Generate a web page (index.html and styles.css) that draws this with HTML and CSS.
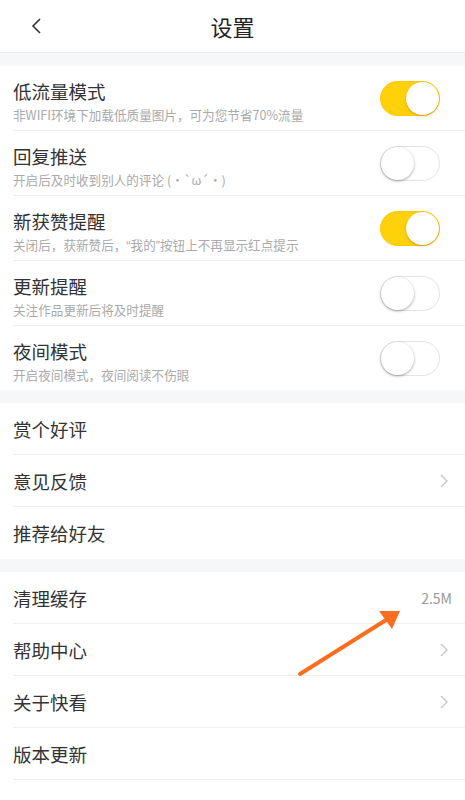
FILE: index.html
```html
<!DOCTYPE html>
<html lang="zh-CN">
<head>
    <meta charset="UTF-8">
    <meta name="viewport" content="width=device-width, initial-scale=1.0">
    <title>设置</title>
    <link rel="stylesheet" href="styles.css">
</head>
<body>
    <header class="topbar">
        <span class="back">
            <svg width="12" height="18" viewBox="0 0 12 18"><path d="M9 2 L2 9 L9 16" fill="none" stroke="#333" stroke-width="1.6"/></svg>
        </span>
        <h1>设置</h1>
    </header>

    <div class="gap"></div>
    <section class="group">
        <div class="row tall">
            <div class="text">
                <div class="title">低流量模式</div>
                <div class="sub">非WIFI环境下加载低质量图片，可为您节省70%流量</div>
            </div>
            <span class="switch on"><span class="knob"></span></span>
        </div>
        <div class="row tall">
            <div class="text">
                <div class="title">回复推送</div>
                <div class="sub">开启后及时收到别人的评论 (・`ω´・)</div>
            </div>
            <span class="switch"><span class="knob"></span></span>
        </div>
        <div class="row tall">
            <div class="text">
                <div class="title">新获赞提醒</div>
                <div class="sub">关闭后，获新赞后，<span class="latin">“</span>我的<span class="latin">”</span>按钮上不再显示红点提示</div>
            </div>
            <span class="switch on"><span class="knob"></span></span>
        </div>
        <div class="row tall">
            <div class="text">
                <div class="title">更新提醒</div>
                <div class="sub">关注作品更新后将及时提醒</div>
            </div>
            <span class="switch"><span class="knob"></span></span>
        </div>
        <div class="row tall last">
            <div class="text">
                <div class="title">夜间模式</div>
                <div class="sub">开启夜间模式，夜间阅读不伤眼</div>
            </div>
            <span class="switch"><span class="knob"></span></span>
        </div>
    </section>

    <div class="gap"></div>
    <section class="group">
        <div class="row"><div class="title">赏个好评</div></div>
        <div class="row">
            <div class="title">意见反馈</div>
            <svg class="chev" width="10" height="16" viewBox="0 0 10 16"><path d="M2 2 L8 8 L2 14" fill="none" stroke="#c8c8c8" stroke-width="1.4"/></svg>
        </div>
        <div class="row last"><div class="title">推荐给好友</div></div>
    </section>

    <div class="gap"></div>
    <section class="group">
        <div class="row">
            <div class="title">清理缓存</div>
            <span class="value">2.5M</span>
        </div>
        <div class="row">
            <div class="title">帮助中心</div>
            <svg class="chev" width="10" height="16" viewBox="0 0 10 16"><path d="M2 2 L8 8 L2 14" fill="none" stroke="#c8c8c8" stroke-width="1.4"/></svg>
        </div>
        <div class="row">
            <div class="title">关于快看</div>
            <svg class="chev" width="10" height="16" viewBox="0 0 10 16"><path d="M2 2 L8 8 L2 14" fill="none" stroke="#c8c8c8" stroke-width="1.4"/></svg>
        </div>
        <div class="row"><div class="title">版本更新</div></div>
    </section>

    <!-- annotation arrow pointing at cache size -->
    <svg class="arrow" width="465" height="800" viewBox="0 0 465 800">
        <line x1="300" y1="674" x2="386" y2="620" stroke="#fb6d1f" stroke-width="4" stroke-linecap="round"/>
        <polygon points="400,611 379,611 392,629" fill="#fb6d1f"/>
    </svg>
</body>
</html>
```

FILE: styles.css
```css
body {
    margin: 0;
    background: #fff;
    font-family: "Noto Sans CJK SC", "Noto Sans", sans-serif;
    color: #333;
    position: relative;
}
.topbar {
    height: 52px;
    border-bottom: 1px solid #ececec;
    display: flex;
    align-items: center;
    justify-content: center;
    position: relative;
}
.topbar h1 {
    margin: 0;
    font-size: 22px;
    font-weight: normal;
    color: #222;
}
.back {
    position: absolute;
    left: 31px;
    top: 16px;
}
.gap {
    height: 13px;
    background: #f6f7f9;
}
.group {
    padding-left: 13px;
}
.row {
    height: 51px;
    border-bottom: 1px solid #efefef;
    display: flex;
    align-items: center;
    justify-content: space-between;
    padding-right: 18px;
}
.row.tall {
    height: 64px;
    padding-right: 25px;
}
.row.last {
    border-bottom: none;
    height: 52px;
}
.row.tall.last {
    height: 64px;
}
.title {
    font-size: 18.5px;
    line-height: 24px;
    color: #333;
}
.sub {
    font-size: 12.6px;
    line-height: 16px;
    color: #aaa;
    margin-top: 4px;
}
.latin {
    font-family: "Liberation Sans", sans-serif;
}
.text {
    padding-top: 6px;
}
.value {
    font-size: 14px;
    color: #999;
    margin-right: -5px;
}
.chev {
    margin-right: -2px;
}
.switch {
    width: 58px;
    height: 33px;
    border-radius: 18px;
    border: 1px solid #e3e3e3;
    background: #fff;
    position: relative;
    flex-shrink: 0;
}
.switch .knob {
    position: absolute;
    left: 0;
    top: 0;
    width: 33px;
    height: 33px;
    border-radius: 50%;
    background: #fff;
    box-shadow: 0 1px 3px rgba(0,0,0,0.35);
}
.switch.on {
    background: #ffd10a;
    border-color: #ffc800;
}
.switch.on .knob {
    left: 25px;
    box-shadow: 0 1px 2px rgba(180,120,0,0.6);
}
.arrow {
    position: absolute;
    left: 0;
    top: 0;
    pointer-events: none;
}
```
